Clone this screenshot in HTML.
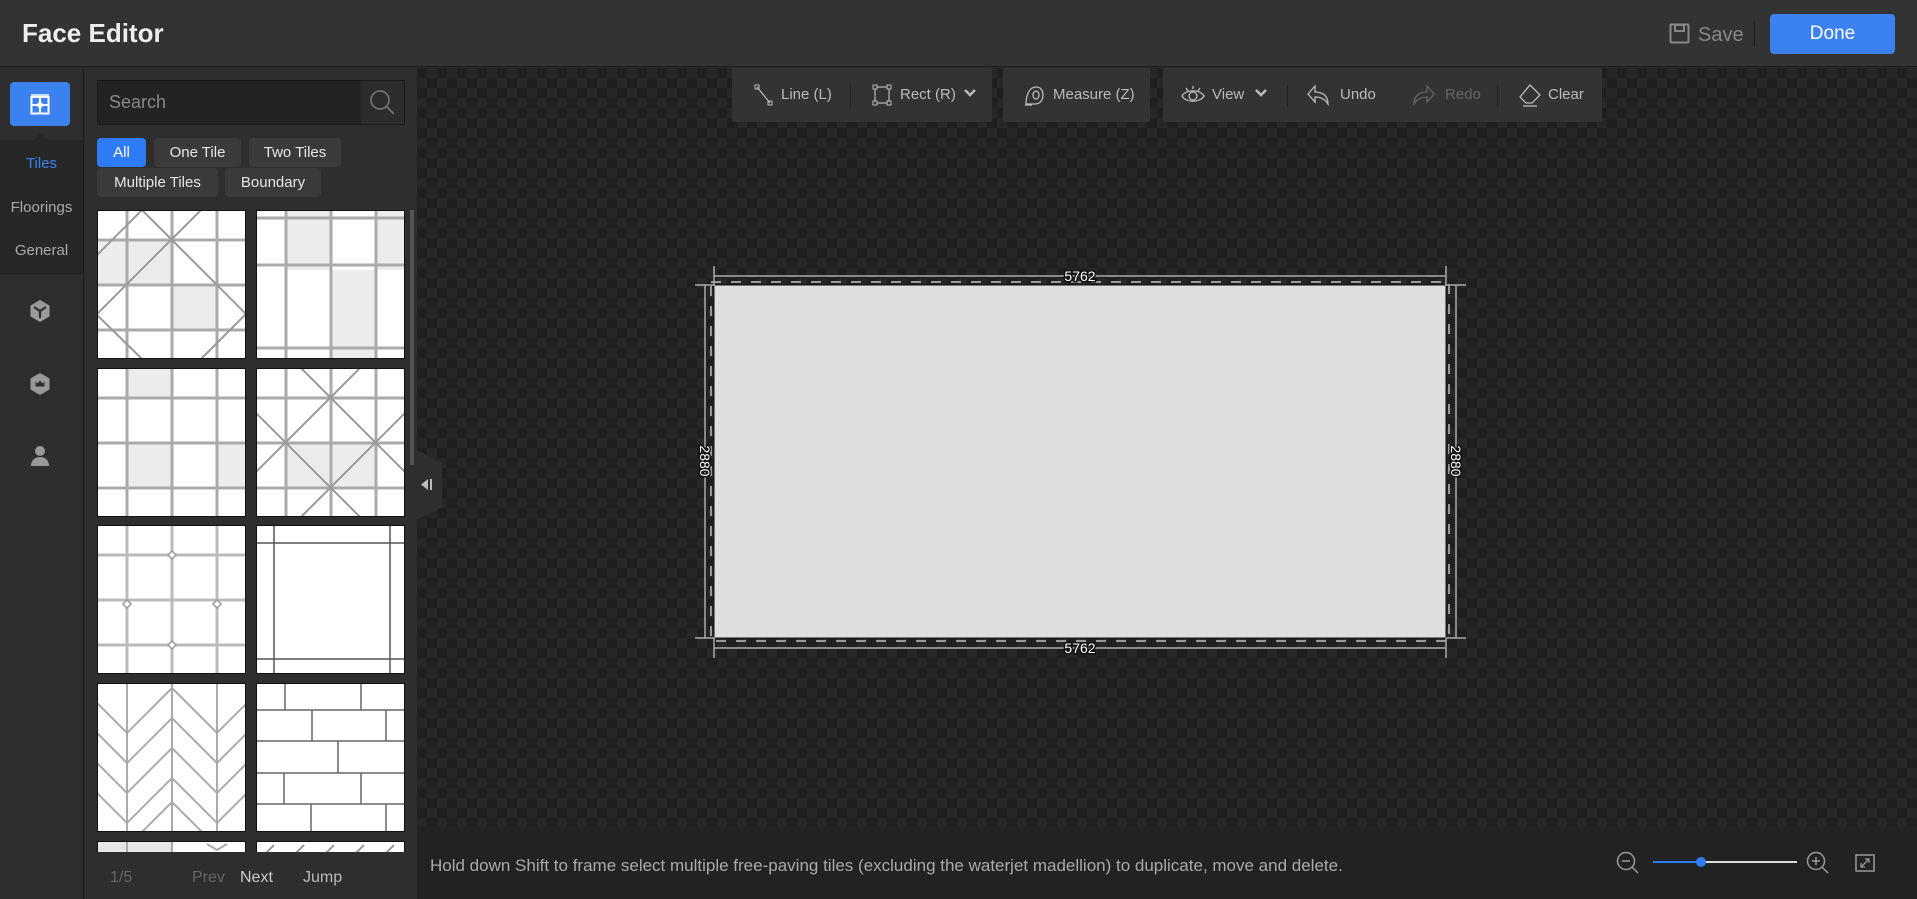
<!DOCTYPE html>
<html><head><meta charset="utf-8"><style>
*{margin:0;padding:0;box-sizing:border-box}
html,body{width:1917px;height:899px;overflow:hidden}
body{background:#2b2b2b;font-family:"Liberation Sans",sans-serif;position:relative;color:#ddd}
.a{position:absolute}
.chip{position:absolute;height:29px;background:#3a3a3a;border-radius:4px;color:#e6e6e6;font-size:15px;line-height:29px;text-align:center}
.tb{position:absolute;top:68px;height:54px;background:#333;border-radius:2px;color:#bbb;font-size:15px}
.tb span{position:absolute;top:18px}
.sep{position:absolute;top:17px;width:1px;height:22px;background:#222}
</style></head><body>
<div class="a" style="left:0;top:0;width:1917px;height:67px;background:#333;border-bottom:1px solid #1e1e1e"></div>
<div class="a" style="left:22px;top:18px;font-size:26px;font-weight:bold;color:#eee">Face Editor</div>
<svg class="a" style="left:1669px;top:23px" width="21" height="21" viewBox="0 0 21 21"><rect x="1.5" y="1.5" width="18" height="18" rx="1" fill="none" stroke="#888" stroke-width="2"/><rect x="6" y="2" width="9" height="6" fill="none" stroke="#888" stroke-width="2"/></svg>
<div class="a" style="left:1698px;top:24px;font-size:20px;color:#888">Save</div>
<div class="a" style="left:1754px;top:22px;width:1px;height:25px;background:#1e1e1e"></div>
<div class="a" style="left:1770px;top:14px;width:125px;height:40px;background:#3b82f0;border-radius:4px;color:#fff;font-size:19px;line-height:40px;text-align:center">Done</div>
<div class="a" style="left:0;top:68px;width:84px;height:831px;background:#2e2e2e;border-right:1px solid #1e1e1e"></div>
<div class="a" style="left:0;top:140px;width:83px;height:134px;background:#272727;border-bottom:1px solid #1e1e1e"></div>
<div class="a" style="left:10px;top:82px;width:60px;height:44px;background:#3b82f0;border-radius:4px"></div>
<svg class="a" style="left:30px;top:94px" width="20" height="21" viewBox="0 0 20 21"><rect x="1.5" y="3" width="17" height="16.5" fill="none" stroke="#fff" stroke-width="2"/><line x1="1" y1="1" x2="19" y2="1" stroke="#fff" stroke-width="1.5"/><line x1="10" y1="3" x2="10" y2="19" stroke="#fff" stroke-width="2"/><line x1="2" y1="11" x2="18" y2="11" stroke="#fff" stroke-width="2"/><path d="M10 7l4 4-4 4-4-4z" fill="#fff"/></svg>
<div class="a" style="left:34px;top:133px;width:0;height:0;border-left:7px solid transparent;border-right:7px solid transparent;border-bottom:7px solid #272727"></div>
<div class="a" style="left:0;top:155px;width:83px;text-align:center;font-size:15px;color:#3b82f0">Tiles</div>
<div class="a" style="left:0;top:199px;width:83px;text-align:center;font-size:15px;color:#aaa">Floorings</div>
<div class="a" style="left:0;top:242px;width:83px;text-align:center;font-size:15px;color:#aaa">General</div>
<svg class="a" style="left:29px;top:299px" width="22" height="24" viewBox="0 0 22 24"><path d="M11 1l9.5 5.5v11L11 23 1.5 17.5v-11z" fill="#999"/><path d="M5 8l6 4 6-4M11 12v7" stroke="#2e2e2e" stroke-width="2.2" fill="none"/></svg>
<svg class="a" style="left:29px;top:372px" width="22" height="24" viewBox="0 0 22 24"><path d="M11 1l9.5 5.5v11L11 23 1.5 17.5v-11z" fill="#999"/><path d="M6.5 9.5l2 2 2.5-3 2.5 3 2-2v5h-9z" fill="#2e2e2e"/></svg>
<svg class="a" style="left:30px;top:445px" width="20" height="22" viewBox="0 0 20 22"><circle cx="10" cy="6" r="5" fill="#999"/><path d="M1 21c0-6 4-9 9-9s9 3 9 9z" fill="#999"/></svg>
<div class="a" style="left:85px;top:68px;width:332px;height:831px;background:#2e2e2e"></div>
<div class="a" style="left:97px;top:80px;width:308px;height:45px;background:#232323;border:1px solid #1a1a1a"></div>
<div class="a" style="left:361px;top:81px;width:43px;height:43px;background:#2c2c2c"></div>
<svg class="a" style="left:369px;top:89px" width="27" height="27" viewBox="0 0 27 27"><circle cx="11" cy="11" r="9" fill="none" stroke="#777" stroke-width="1.6"/><line x1="17.5" y1="17.5" x2="25" y2="25" stroke="#777" stroke-width="1.6"/></svg>
<div class="a" style="left:109px;top:92px;font-size:18px;color:#888">Search</div>
<div class="chip" style="left:97px;top:138px;width:49px;background:#2d7cf6;color:#fff">All</div>
<div class="chip" style="left:154px;top:138px;width:87px">One Tile</div>
<div class="chip" style="left:249px;top:138px;width:92px">Two Tiles</div>
<div class="chip" style="left:97px;top:168px;width:121px">Multiple Tiles</div>
<div class="chip" style="left:225px;top:168px;width:96px">Boundary</div>
<div class="a" style="left:85px;top:205px;width:325px;height:647px;overflow:hidden">
<svg width="325" height="647" style="position:absolute;left:0;top:0">
<defs>
<g id="grid"><g stroke="#aaa" stroke-width="3"><line x1="30" y1="0" x2="30" y2="149"/><line x1="75" y1="0" x2="75" y2="149"/><line x1="120" y1="0" x2="120" y2="149"/><line x1="0" y1="30" x2="149" y2="30"/><line x1="0" y1="75" x2="149" y2="75"/><line x1="0" y1="120" x2="149" y2="120"/></g></g>
</defs>
<svg x="12" y="5" width="149" height="149"><rect width="149" height="149" fill="#fff"/><rect x="30" y="30" width="45" height="45" fill="#ececec"/><rect x="75" y="75" width="45" height="45" fill="#ececec"/><rect x="0" y="30" width="30" height="45" fill="#ececec"/><use href="#grid"/><g stroke="#999" stroke-width="2"><line x1="0" y1="-45" x2="194" y2="149"/><line x1="149" y1="-45" x2="-45" y2="149"/><line x1="-30" y1="75" x2="45" y2="0"/><line x1="104" y1="149" x2="149" y2="104"/><line x1="0" y1="105" x2="45" y2="149"/></g><rect x=".5" y=".5" width="148" height="148" fill="none" stroke="#111"/></svg>
<svg x="171" y="5" width="149" height="149"><rect width="149" height="149" fill="#fff"/><rect x="30" y="0" width="45" height="60" fill="#ececec"/><rect x="75" y="60" width="45" height="89" fill="#ececec"/><rect x="120" y="0" width="29" height="60" fill="#ececec"/><g stroke="#aaa" stroke-width="3"><line x1="30" y1="0" x2="30" y2="149"/><line x1="75" y1="0" x2="75" y2="149"/><line x1="120" y1="0" x2="120" y2="149"/><line x1="0" y1="8" x2="149" y2="8"/><line x1="0" y1="55" x2="149" y2="55"/><line x1="0" y1="138" x2="149" y2="138"/></g><rect x=".5" y=".5" width="148" height="148" fill="none" stroke="#111"/></svg>
<svg x="12" y="163" width="149" height="149"><rect width="149" height="149" fill="#fff"/><rect x="30" y="0" width="45" height="30" fill="#ececec"/><rect x="30" y="75" width="45" height="45" fill="#ececec"/><rect x="120" y="75" width="29" height="45" fill="#ececec"/><use href="#grid"/><rect x=".5" y=".5" width="148" height="148" fill="none" stroke="#111"/></svg>
<svg x="171" y="163" width="149" height="149"><rect width="149" height="149" fill="#fff"/><rect x="30" y="75" width="90" height="45" fill="#ececec"/><use href="#grid"/><g stroke="#999" stroke-width="2"><line x1="-45" y1="0" x2="104" y2="149"/><line x1="45" y1="0" x2="194" y2="149"/><line x1="104" y1="0" x2="-45" y2="149"/><line x1="194" y1="0" x2="45" y2="149"/></g><rect x=".5" y=".5" width="148" height="148" fill="none" stroke="#111"/></svg>
<svg x="12" y="320" width="149" height="149"><rect width="149" height="149" fill="#fff"/><g stroke="#bbb" stroke-width="3"><line x1="30" y1="0" x2="30" y2="149"/><line x1="75" y1="0" x2="75" y2="149"/><line x1="120" y1="0" x2="120" y2="149"/><line x1="0" y1="30" x2="149" y2="30"/><line x1="0" y1="75" x2="149" y2="75"/><line x1="0" y1="120" x2="149" y2="120"/></g><g fill="#fff" stroke="#999" stroke-width="1.5"><path d="M75 26l4 4-4 4-4-4z"/><path d="M30 75l4 4-4 4-4-4z"/><path d="M120 75l4 4-4 4-4-4z"/><path d="M75 116l4 4-4 4-4-4z"/></g><rect x=".5" y=".5" width="148" height="148" fill="none" stroke="#111"/></svg>
<svg x="171" y="320" width="149" height="149"><rect width="149" height="149" fill="#fff"/><g stroke="#555" stroke-width="1.5"><line x1="18" y1="0" x2="18" y2="149"/><line x1="134" y1="0" x2="134" y2="149"/><line x1="0" y1="18" x2="149" y2="18"/><line x1="0" y1="134" x2="149" y2="134"/></g><rect x=".5" y=".5" width="148" height="148" fill="none" stroke="#111"/></svg>
<svg x="12" y="478" width="149" height="149"><rect width="149" height="149" fill="#fff"/><g stroke="#aaa" stroke-width="2" fill="none"><line x1="30" y1="0" x2="30" y2="149"/><line x1="75" y1="0" x2="75" y2="149"/><line x1="120" y1="0" x2="120" y2="149"/><path d="M0 20l30 30 45-45M75 5l45 45 30-30"/><path d="M0 50l30 30 45-45 45 45 30-30"/><path d="M0 80l30 30 45-45 45 45 30-30"/><path d="M0 110l30 30 45-45 45 45 30-30"/><path d="M45 149l30-30 30 30"/></g><rect x=".5" y=".5" width="148" height="148" fill="none" stroke="#111"/></svg>
<svg x="171" y="478" width="149" height="149"><rect width="149" height="149" fill="#fff"/><g stroke="#666" stroke-width="1.5"><line x1="0" y1="27" x2="149" y2="27"/><line x1="0" y1="58" x2="149" y2="58"/><line x1="0" y1="90" x2="149" y2="90"/><line x1="0" y1="121" x2="149" y2="121"/><line x1="29" y1="0" x2="29" y2="27"/><line x1="105" y1="0" x2="105" y2="27"/><line x1="56" y1="27" x2="56" y2="58"/><line x1="130" y1="27" x2="130" y2="58"/><line x1="82" y1="58" x2="82" y2="90"/><line x1="28" y1="90" x2="28" y2="121"/><line x1="105" y1="90" x2="105" y2="121"/><line x1="55" y1="121" x2="55" y2="149"/><line x1="130" y1="121" x2="130" y2="149"/></g><rect x=".5" y=".5" width="148" height="148" fill="none" stroke="#111"/></svg>
<svg x="12" y="636" width="149" height="149"><rect width="149" height="149" fill="#fff"/><rect width="75" height="12" fill="#e6e6e6"/><path d="M30 0v12M75 0v12M110 3l10 6 10-6" stroke="#aaa" stroke-width="2" fill="none"/><rect x=".5" y=".5" width="148" height="148" fill="none" stroke="#111"/></svg>
<svg x="171" y="636" width="149" height="149"><rect width="149" height="149" fill="#fff"/><path d="M10 12l8-8M40 12l8-8M70 12l8-8M100 12l8-8M130 12l8-8" stroke="#999" stroke-width="2"/><rect x=".5" y=".5" width="148" height="148" fill="none" stroke="#111"/></svg>
</svg></div>
<div class="a" style="left:410px;top:210px;width:4px;height:255px;background:#555"></div>
<div class="a" style="left:110px;top:869px;font-size:16px;color:#666">1/5</div>
<div class="a" style="left:192px;top:869px;font-size:16px;color:#666">Prev</div>
<div class="a" style="left:240px;top:869px;font-size:16px;color:#ccc">Next</div>
<div class="a" style="left:303px;top:869px;font-size:16px;color:#bbb">Jump</div>
<div class="a" style="left:417px;top:68px;width:1500px;height:759px;background-color:#1f1f1f;background-image:linear-gradient(45deg,#272727 25%,transparent 25%,transparent 75%,#272727 75%),linear-gradient(45deg,#272727 25%,transparent 25%,transparent 75%,#272727 75%);background-size:20px 20px;background-position:0 0,10px 10px"></div>
<div class="a" style="left:417px;top:450px;width:25px;height:70px;background:#2e2e2e;clip-path:polygon(0 0,100% 18%,100% 82%,0 100%)"></div>
<svg class="a" style="left:420px;top:478px" width="14" height="13" viewBox="0 0 14 13"><path d="M8 1L1 6.5 8 12z" fill="#bbb"/><rect x="10" y="1" width="2" height="11" fill="#bbb"/></svg>
<div class="tb" style="left:732px;width:260px"><svg class="a" style="left:22px;top:16px" width="20" height="22"><path d="M3 3l13 16" stroke="#bbb" stroke-width="1.2"/><rect x="1" y="1" width="4" height="4" fill="none" stroke="#bbb"/><rect x="14" y="17" width="4" height="4" fill="none" stroke="#bbb"/></svg><span style="left:49px">Line (L)</span><div class="sep" style="left:118px"></div><svg class="a" style="left:140px;top:16px" width="20" height="22"><rect x="3" y="3" width="14" height="16" fill="none" stroke="#bbb" stroke-width="1.2"/><g fill="#333" stroke="#bbb"><rect x="1" y="1" width="4" height="4"/><rect x="15" y="1" width="4" height="4"/><rect x="1" y="17" width="4" height="4"/><rect x="15" y="17" width="4" height="4"/></g></svg><span style="left:168px">Rect (R)</span><svg class="a" style="left:232px;top:21px" width="12" height="9"><path d="M1 1l5 5 5-5" stroke="#bbb" stroke-width="2.5" fill="none"/></svg></div>
<div class="tb" style="left:1003px;width:147px"><svg class="a" style="left:20px;top:16px" width="22" height="22"><path d="M2 21h7M3 20c0-8 3-17 10-17 5 0 7 4 7 8 0 5-3 9-8 9z" stroke="#bbb" stroke-width="1.3" fill="none"/><ellipse cx="13" cy="11" rx="3" ry="4" stroke="#bbb" stroke-width="1.3" fill="none"/></svg><span style="left:50px">Measure (Z)</span></div>
<div class="tb" style="left:1163px;width:439px"><svg class="a" style="left:18px;top:17px" width="24" height="20"><path d="M1 11c4-7 18-7 22 0-4 7-18 7-22 0z" stroke="#bbb" stroke-width="1.3" fill="none"/><circle cx="12" cy="11" r="4" stroke="#bbb" stroke-width="1.3" fill="none"/><path d="M5 3l2 3M12 1v3M19 3l-2 3" stroke="#bbb" stroke-width="1.3"/></svg><span style="left:49px">View</span><svg class="a" style="left:92px;top:21px" width="12" height="9"><path d="M1 1l5 5 5-5" stroke="#bbb" stroke-width="2.5" fill="none"/></svg><div class="sep" style="left:124px"></div><svg class="a" style="left:143px;top:16px" width="24" height="22"><path d="M9 2L2 10l7 8v-5c6 0 10 2 13 7 0-8-5-12-13-12z" stroke="#bbb" stroke-width="1.3" fill="none"/></svg><span style="left:177px">Undo</span><svg class="a" style="left:249px;top:16px" width="24" height="22"><path d="M15 2l7 8-7 8v-5c-6 0-10 2-13 7 0-8 5-12 13-12z" stroke="#666" stroke-width="1.3" fill="none"/></svg><span style="left:282px;color:#666">Redo</span><div class="sep" style="left:334px"></div><svg class="a" style="left:355px;top:15px" width="24" height="24"><path d="M12 2l10 10-8 8H8L2 14z" stroke="#bbb" stroke-width="1.3" fill="none"/><path d="M5 23h14" stroke="#bbb" stroke-width="1.3"/></svg><span style="left:385px">Clear</span></div>
<svg class="a" style="left:690px;top:260px" width="790" height="410">
<rect x="24" y="25" width="732" height="353" fill="#dedede" stroke="#111" stroke-width="1"/>
<g stroke="#999" stroke-width="2" stroke-dasharray="10 10" fill="none"><rect x="21" y="22" width="738" height="359"/></g>
<g stroke="#aaa" stroke-width="1.5">
<line x1="24" y1="16" x2="756" y2="16"/><line x1="24" y1="6" x2="24" y2="26"/><line x1="756" y1="6" x2="756" y2="26"/>
<line x1="24" y1="388" x2="756" y2="388"/><line x1="24" y1="378" x2="24" y2="398"/><line x1="756" y1="378" x2="756" y2="398"/>
<line x1="15" y1="25" x2="15" y2="378"/><line x1="5" y1="25" x2="25" y2="25"/><line x1="5" y1="378" x2="25" y2="378"/>
<line x1="766" y1="25" x2="766" y2="378"/><line x1="756" y1="25" x2="776" y2="25"/><line x1="756" y1="378" x2="776" y2="378"/>
</g>
<g font-family="Liberation Sans" font-size="14" fill="#fff" stroke="#111" stroke-width="3" paint-order="stroke" text-anchor="middle">
<text x="390" y="21">5762</text><text x="390" y="393">5762</text>
<text transform="translate(10,201) rotate(90)">2880</text><text transform="translate(761,201) rotate(90)">2880</text>
</g></svg>
<div class="a" style="left:417px;top:827px;width:1500px;height:72px;background:#222"></div>
<div class="a" style="left:430px;top:856px;font-size:17px;color:#aaa;white-space:nowrap">Hold down Shift to frame select multiple free-paving tiles (excluding the waterjet madellion) to duplicate, move and delete.</div>
<svg class="a" style="left:1616px;top:851px" width="24" height="24"><circle cx="10" cy="10" r="8.5" stroke="#999" stroke-width="1.5" fill="none"/><path d="M6 10h8M16 16l6 6" stroke="#999" stroke-width="1.5"/></svg>
<div class="a" style="left:1653px;top:861px;width:144px;height:2px;background:#ddd"></div>
<div class="a" style="left:1653px;top:861px;width:48px;height:2px;background:#2d7cf6"></div>
<div class="a" style="left:1696px;top:857px;width:10px;height:10px;border-radius:50%;background:#2d7cf6"></div>
<svg class="a" style="left:1806px;top:851px" width="24" height="24"><circle cx="10" cy="10" r="8.5" stroke="#999" stroke-width="1.5" fill="none"/><path d="M6 10h8M10 6v8M16 16l6 6" stroke="#999" stroke-width="1.5"/></svg>
<svg class="a" style="left:1855px;top:854px" width="20" height="18"><rect x="1" y="1" width="18" height="16" fill="none" stroke="#999" stroke-width="1.5"/><path d="M6 13l8-8M10 5h4v4M6 9v4h4" stroke="#999" stroke-width="1.3" fill="none"/></svg>
</body></html>
